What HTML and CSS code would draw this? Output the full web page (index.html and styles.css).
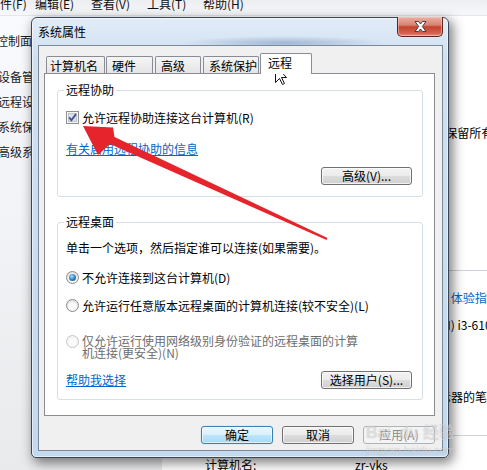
FILE: index.html
```html
<!DOCTYPE html>
<html lang="zh-CN">
<head>
  <meta charset="UTF-8" />
  <title>系统属性</title>
  <meta name="viewport" content="width=device-width, initial-scale=1.0" />
  <link rel="stylesheet" href="styles.css">
</head>
<body>

  <div class="menubar">
    <span>文件(F)</span>
    <span>编辑(E)</span>
    <span>查看(V)</span>
    <span>工具(T)</span>
    <span>帮助(H)</span>
  </div>

  <div class="workspace">
    <nav class="tasks">
      <a href="#" class="home">控制面板主页</a>
      <a href="#">设备管理器</a>
      <a href="#">远程设置</a>
      <a href="#">系统保护</a>
      <a href="#">高级系统设置</a>
    </nav>

    <main class="sysinfo">
      <div class="line">Windows 版本</div>
      <div class="line">Windows 7 旗舰版</div>
      <div class="line copyright">版权所有 © 2009 Microsoft Corporation。保留所有权利。</div>

      <div class="sect sect-sys"><span>系统</span><i></i></div>
      <div class="prop rating"><span class="key">分级:</span><span class="val"><b class="score">4.9</b><a href="#">Windows 体验指数</a></span></div>
      <div class="prop"><span class="key">处理器:</span><span class="val cpu">Intel(R) Core(TM) i3-6100 CPU @ 3.70GHz</span></div>
      <div class="prop"><span class="key">安装内存(RAM):</span><span class="val">4.00 GB</span></div>
      <div class="prop"><span class="key">系统类型:</span><span class="val">64 位操作系统</span></div>
      <div class="prop"><span class="key">笔和触摸:</span><span class="val">没有可用于此显示器的笔或触控输入</span></div>

      <div class="sect sect-name"><span>计算机名称、域和工作组设置</span><i></i></div>
      <div class="prop"><span class="key">计算机名:</span><span class="val">zr-yks</span></div>
    </main>
  </div>

  <section class="dialog">
    <div class="titlebar">
      <span class="title">系统属性</span>
      <button class="close" aria-label="关闭">
        <svg width="13" height="11" viewBox="0 0 13 11">
          <path d="M1 0.5H4.5L6.5 3L8.5 0.5H12L8.3 5.5L12 10.5H8.5L6.5 8L4.5 10.5H1L4.7 5.5Z" fill="#fff" stroke="#33333a" stroke-width="0.9"/>
        </svg>
      </button>
    </div>

    <div class="client">
      <div class="tabs">
        <span class="tab tab-name">计算机名</span>
        <span class="tab tab-hw">硬件</span>
        <span class="tab tab-adv">高级</span>
        <span class="tab tab-prot">系统保护</span>
        <span class="tab active">远程</span>
      </div>

      <div class="panel">
        <fieldset class="group assist">
          <legend>远程协助</legend>
          <label class="option check-row">
            <svg class="check" width="13" height="13" viewBox="0 0 13 13">
              <rect x="0.5" y="0.5" width="12" height="12" fill="#f6f6f6" stroke="#8e8f8f"/>
              <rect x="2.5" y="2.5" width="8" height="8" fill="#dde2ea" stroke="#b4b9c0" stroke-width="0.8"/>
              <path d="M3.2 6.4L5.4 9.2L9.9 3.1" fill="none" stroke="#3c5294" stroke-width="1.8"/>
            </svg>
            允许远程协助连接这台计算机(R)
          </label>
          <a href="#" class="link info-link">有关启用远程协助的信息</a>
          <div class="group-foot">
            <button class="btn">高级(V)...</button>
          </div>
        </fieldset>

        <fieldset class="group desktop">
          <legend>远程桌面</legend>
          <p class="hint">单击一个选项，然后指定谁可以连接(如果需要)。</p>
          <label class="option r1"><span class="radio on"></span>不允许连接到这台计算机(D)</label>
          <label class="option r2"><span class="radio"></span>允许运行任意版本远程桌面的计算机连接(较不安全)(L)</label>
          <label class="option r3 disabled"><span class="radio"></span><span class="wrap">仅允许运行使用网络级别身份验证的远程桌面的计算机连接(更安全)(N)</span></label>
          <div class="group-foot split">
            <a href="#" class="link">帮助我选择</a>
            <button class="btn">选择用户(S)...</button>
          </div>
        </fieldset>
      </div>

      <div class="actions">
        <button class="btn default">确定</button>
        <button class="btn">取消</button>
        <button class="btn" disabled>应用(A)</button>
      </div>
    </div>
  </section>

  <svg class="annot" width="487" height="470" viewBox="0 0 487 470">
    <!-- red arrow pointing at the checkbox -->
    <polygon points="83,126 113,127.5 114.5,137 327.5,238 326.5,240 110,144 98,155" fill="#e5242b"/>
    <!-- mouse pointer over the tab -->
    <path d="M275.5 65.5V82.5L279.5 78.5L282.5 84.5L284.5 83.5L281.5 77.5H286.5Z" fill="#fff" stroke="#111" stroke-width="1" stroke-linejoin="round"/>
  </svg>

  <div class="watermark">
    <span class="wm-logo">Bai<b>du</b> 经验</span>
    <span class="wm-url">jingyan.baidu.com</span>
  </div>

</body>
</html>
```

FILE: styles.css
```css
* { box-sizing: border-box; }

body {
  margin: 0;
  width: 487px;
  height: 470px;
  overflow: hidden;
  position: relative;
  font-family: "Noto Sans CJK SC", "Liberation Sans", sans-serif;
  font-size: 12px;
  color: #000;
  background: #fff;
}

button { font: inherit; }

/* ---------- explorer window behind ---------- */

.menubar {
  display: flex;
  height: 16px;
  overflow: hidden;
  background: linear-gradient(#eceef1, #f7f8fa);
  border-bottom: 1px solid #e3e6ea;
}

.menubar span {
  flex: none;
  width: 56px;
  line-height: 12px;
  margin-top: -2px;
  white-space: nowrap;
  color: #111;
}

.menubar span:first-child {
  width: 47px;
  margin-left: -12px;
}

.workspace {
  display: flex;
  height: 454px;
}

.tasks {
  flex: none;
  width: 162px;
  padding-top: 12px;
  background: linear-gradient(#f8fafd, #e9eaec);
  display: flex;
  flex-direction: column;
}

.tasks a {
  line-height: 25px;
  margin-left: -2px;
  color: #1b1b1b;
  text-decoration: none;
  white-space: nowrap;
}

.tasks .home {
  margin-left: -4px;
  margin-bottom: 11px;
}

.sysinfo {
  flex: 1;
  padding: 57px 0 0 43px;
  white-space: nowrap;
}

.line { line-height: 24px; }

.copyright { padding-left: 13px; }

.sect {
  display: flex;
  align-items: center;
  gap: 6px;
  height: 16px;
  color: #1e3287;
}

.sect i {
  flex: 1;
  border-top: 1px solid #cfd4da;
}

.sect-sys { margin-top: 117px; }
.sect-name { margin-top: 18px; }

.prop {
  display: flex;
  line-height: 24px;
}

.sect + .prop { margin-top: 10px; }

.prop .key {
  flex: none;
  width: 150px;
}

.prop .cpu { padding-left: 5px; }

.prop.rating {
  margin: 8px 0 3px;
}

.score {
  display: inline-block;
  width: 30px;
  margin-right: 12px;
  font-weight: normal;
  text-align: center;
  background: #2e6db4;
  color: #fff;
}

.prop a {
  color: #0066cc;
  text-decoration: none;
}

/* ---------- dialog ---------- */

.dialog {
  position: absolute;
  left: 31px;
  top: 17px;
  width: 418px;
  height: 441px;
  padding: 0 5px 6px 6px;
  border: 1px solid #3a4656;
  border-radius: 6px 6px 5px 5px;
  background:
    radial-gradient(ellipse 100px 7px at 252px 25px, rgba(96, 128, 172, 0.45), transparent),
    linear-gradient(#e2ecf7, #cfe0f2 40px, #c3d9ef);
  box-shadow:
    inset 0 0 0 1px rgba(255, 255, 255, 0.55),
    3px 4px 12px 1px rgba(0, 0, 0, 0.5);
}

.titlebar {
  display: flex;
  align-items: flex-start;
  height: 27px;
}

.title {
  margin-top: 8px;
  line-height: 12px;
}

.close {
  margin: -1px 0 0 auto;
  width: 46px;
  height: 20px;
  padding: 0;
  display: flex;
  align-items: center;
  justify-content: center;
  border: 1px solid #5e241d;
  border-top: none;
  border-radius: 0 0 5px 5px;
  background: linear-gradient(#eab0a2, #d98472 42%, #c4432f 52%, #d0634f 85%, #e29380);
  box-shadow: inset 0 0 0 1px rgba(255, 220, 210, 0.45);
}

.client {
  height: 406px;
  display: flex;
  flex-direction: column;
  padding: 7px 7px 0 5px;
  border: 1px solid #7d8997;
  background: #f0f0f0;
}

.tabs {
  display: flex;
  align-items: flex-start;
  height: 21px;
  margin: 0 0 -1px 2px;
  position: relative;
  z-index: 1;
}

.tab {
  flex: none;
  height: 17px;
  margin-top: 3px;
  padding: 3px 0 0 5px;
  line-height: 12px;
  white-space: nowrap;
  border: 1px solid #898c95;
  border-bottom: none;
  border-radius: 2px 2px 0 0;
  background: linear-gradient(#f5f5f5, #e5e5e5);
}

.tab-name { width: 59px; margin-right: 1px; padding-left: 3px; }
.tab-hw { width: 47px; margin-right: 2px; }
.tab-adv { width: 46px; margin-right: 2px; }
.tab-prot { width: 56px; margin-right: 1px; }

.tab.active {
  width: 52px;
  height: 21px;
  margin-top: 0;
  padding-left: 7px;
  background: #fff;
}

.panel {
  flex: 1;
  padding: 10px 11px 0 12px;
  border: 1px solid #898c95;
  background: #fff;
}

.group {
  margin: 0;
  padding: 0 10px 11px 8px;
  min-inline-size: 0;
  border: 1px solid #d5dfe5;
  border-radius: 3px;
}

.group legend {
  margin-left: -2px;
  padding: 0 2px;
  line-height: 12px;
}

.group.desktop {
  margin-top: 19px;
  padding-bottom: 10px;
}

.option {
  display: flex;
  align-items: center;
  height: 13px;
  line-height: 12px;
  white-space: nowrap;
}

.check {
  flex: none;
  margin-right: 3px;
}

.check-row { margin-top: 15px; }

.link {
  display: block;
  width: max-content;
  line-height: 12px;
  color: #0066cc;
  text-decoration: underline;
}

.info-link { margin-top: 19px; }

.group-foot {
  display: flex;
  justify-content: flex-end;
  align-items: center;
  margin-top: 12px;
}

.group-foot.split { justify-content: space-between; }

.hint {
  margin: 14px 0 0;
  line-height: 12px;
}

.radio {
  flex: none;
  position: relative;
  width: 13px;
  height: 13px;
  margin-right: 3px;
  border-radius: 50%;
  border: 1px solid #8c8c8c;
  background: radial-gradient(circle at 50% 60%, #fbfbfb 0 35%, #d3d3d3 95%);
}

.radio.on::after {
  content: "";
  position: absolute;
  left: 2px;
  top: 2px;
  width: 7px;
  height: 7px;
  border-radius: 50%;
  background: radial-gradient(circle at 40% 35%, #a8e2ff, #2a7cc2 55%, #0d4b87);
}

.r1 { margin-top: 17px; }
.r2 { margin-top: 15px; }

.r3 {
  margin-top: 23px;
  height: auto;
  align-items: flex-start;
  white-space: normal;
}

.r3 .wrap { width: 280px; }

.disabled { color: #6d6d6d; }

.disabled .radio {
  border-color: #c6c6c6;
  background: radial-gradient(circle at 50% 60%, #fbfbfb 0 35%, #ececec 95%);
}

.btn {
  width: 91px;
  height: 18px;
  padding: 0;
  line-height: 16px;
  color: #000;
  border: 1px solid #707070;
  border-radius: 3px;
  background: linear-gradient(#f2f2f2 0%, #ebebeb 50%, #dddddd 51%, #cfcfcf 100%);
  box-shadow: inset 0 0 0 1px rgba(255, 255, 255, 0.7);
}

.actions {
  flex: none;
  height: 34px;
  padding-top: 10px;
  display: flex;
  justify-content: flex-end;
  align-items: flex-start;
  gap: 9px;
}

.actions .btn { width: 72px; }

.btn.default {
  border-color: #3c7fb1;
  background: linear-gradient(#eaf6fd 0%, #d9f0fc 50%, #bee6fd 51%, #a7d9f5 100%);
  box-shadow: inset 0 0 0 1px rgba(255, 255, 255, 0.6), 0 0 1px #6cc7f2;
}

.btn:disabled {
  color: #8a8a8a;
  border-color: #adb2b5;
  background: #f4f4f4;
  box-shadow: none;
}

/* ---------- overlays ---------- */

.annot {
  position: absolute;
  left: 0;
  top: 0;
  pointer-events: none;
}

.watermark {
  position: absolute;
  left: 366px;
  top: 424px;
  display: flex;
  flex-direction: column;
  align-items: center;
  font-family: "Liberation Sans", "Noto Sans CJK SC", sans-serif;
  color: rgba(255, 255, 255, 0.4);
  text-shadow: 0 0 1px rgba(110, 110, 110, 0.35);
  pointer-events: none;
}

.wm-logo {
  font-size: 16px;
  line-height: 18px;
  font-weight: bold;
}

.wm-logo b { margin-left: 8px; }

.wm-url {
  font-size: 11px;
  line-height: 12px;
  margin-top: 2px;
}
```
